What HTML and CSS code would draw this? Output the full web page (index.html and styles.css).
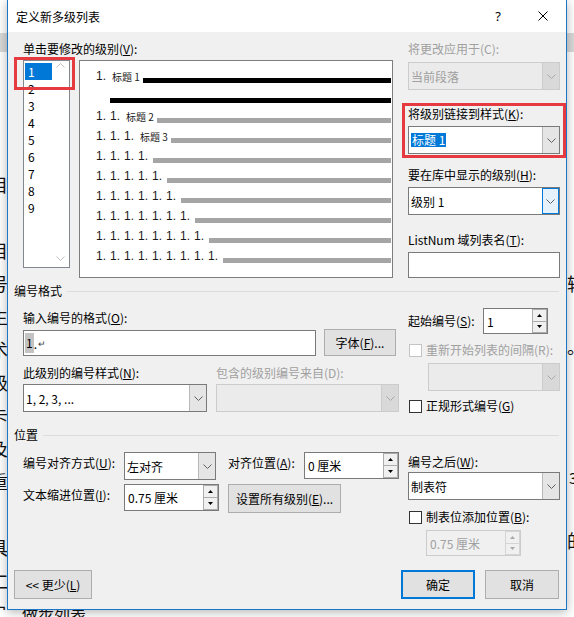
FILE: index.html
```html
<!DOCTYPE html>
<html lang="zh-CN">
<head>
<meta charset="utf-8">
<title>定义新多级列表</title>
<link rel="stylesheet" href="styles.css">
</head>
<body>
<div class="page">
  <div class="doc-left">
    <div class="ruler"></div>
    <span class="dl dl-first">”</span>
    <span class="dl">目</span>
    <span class="dl">。</span>
    <span class="dl">目</span>
    <span class="dl">号</span>
    <span class="dl">生</span>
    <span class="dl">术</span>
    <span class="dl">级</span>
    <span class="dl">卡</span>
    <span class="dl">及</span>
    <span class="dl">重</span>
    <span class="dl">&nbsp;</span>
    <span class="dl">具</span>
    <span class="dl">仁</span>
    <span class="dl">已</span>
  </div>

  <div class="dialog">
    <div class="titlebar">
      <div class="title">定义新多级列表</div>
      <div class="tb-btn tb-help">?</div>
      <div class="tb-btn tb-close"><svg width="10" height="10" viewBox="0 0 10 10"><path d="M0.5 0.5L9.5 9.5M9.5 0.5L0.5 9.5"/></svg></div>
    </div>

    <div class="body">
      <div class="top">
        <div class="top-left">
          <div class="label lbl-levels">单击要修改的级别(<u>V</u>):</div>
          <div class="top-row">
            <div class="levels">
              <div class="level-items">
                <div class="lv lv-sel">1</div>
                <div class="lv">2</div>
                <div class="lv">3</div>
                <div class="lv">4</div>
                <div class="lv">5</div>
                <div class="lv">6</div>
                <div class="lv">7</div>
                <div class="lv">8</div>
                <div class="lv">9</div>
              </div>
              <div class="vscroll">
                <svg class="chev" width="9" height="5" viewBox="0 0 9 5"><polyline points="0.5,4.5 4.5,0.5 8.5,4.5"/></svg>
                <svg class="chev" width="9" height="5" viewBox="0 0 9 5"><polyline points="0.5,0.5 4.5,4.5 8.5,0.5"/></svg>
              </div>
            </div>
            <div class="preview">
              <div class="pv-row"><span class="pv-num">1.</span><span class="pv-ttl">标题 1</span><span class="bar bar-dark"></span></div>
              <div class="pv-row"><span class="bar bar-dark bar-cont"></span></div>
              <div class="pv-row"><span class="pv-num">1. 1.</span><span class="pv-ttl">标题 2</span><span class="bar"></span></div>
              <div class="pv-row"><span class="pv-num">1. 1. 1.</span><span class="pv-ttl">标题 3</span><span class="bar"></span></div>
              <div class="pv-row"><span class="pv-num">1. 1. 1. 1.</span><span class="bar"></span></div>
              <div class="pv-row"><span class="pv-num">1. 1. 1. 1. 1.</span><span class="bar"></span></div>
              <div class="pv-row"><span class="pv-num">1. 1. 1. 1. 1. 1.</span><span class="bar"></span></div>
              <div class="pv-row"><span class="pv-num">1. 1. 1. 1. 1. 1. 1.</span><span class="bar"></span></div>
              <div class="pv-row"><span class="pv-num">1. 1. 1. 1. 1. 1. 1. 1.</span><span class="bar"></span></div>
              <div class="pv-row"><span class="pv-num">1. 1. 1. 1. 1. 1. 1. 1. 1.</span><span class="bar"></span></div>
            </div>
          </div>
        </div>

        <div class="top-right">
          <div class="label dis">将更改应用于(C):</div>
          <div class="combo combo-dis mt-5"><span class="combo-val">当前段落</span><span class="combo-btn"><svg class="chev" width="9" height="5" viewBox="0 0 9 5"><polyline points="0.5,0.5 4.5,4.5 8.5,0.5"/></svg></span></div>
          <div class="label mt-16">将级别链接到样式(<u>K</u>):</div>
          <div class="combo mt-4"><span class="combo-val"><span class="hl">标题 1</span></span><span class="combo-btn"><svg class="chev" width="9" height="5" viewBox="0 0 9 5"><polyline points="0.5,0.5 4.5,4.5 8.5,0.5"/></svg></span></div>
          <div class="label mt-13">要在库中显示的级别(<u>H</u>):</div>
          <div class="combo mt-4"><span class="combo-val">级别 1</span><span class="combo-btn combo-btn-focus"><svg class="chev" width="9" height="5" viewBox="0 0 9 5"><polyline points="0.5,0.5 4.5,4.5 8.5,0.5"/></svg></span></div>
          <div class="label mt-17">ListNum 域列表名(<u>T</u>):</div>
          <div class="textbox mt-4"></div>
        </div>
      </div>

      <div class="sec-head mt-5">编号格式</div>
      <div class="sec">
        <div class="sec-left">
          <div class="label mt-11">输入编号的格式(<u>O</u>):</div>
          <div class="fmt-row mt-3">
            <div class="textbox fmt-input"><span class="sel-grey">1</span>.<span class="pilcrow">↵</span></div>
            <div class="btn btn-font">字体(<u>F</u>)...</div>
          </div>
          <div class="two-col mt-9">
            <div class="label">此级别的编号样式(<u>N</u>):</div>
            <div class="label dis">包含的级别编号来自(D):</div>
          </div>
          <div class="two-col mt-3">
            <div class="combo"><span class="combo-val">1, 2, 3, ...</span><span class="combo-btn"><svg class="chev" width="9" height="5" viewBox="0 0 9 5"><polyline points="0.5,0.5 4.5,4.5 8.5,0.5"/></svg></span></div>
            <div class="combo combo-dis"><span class="combo-val"></span><span class="combo-btn"><svg class="chev" width="9" height="5" viewBox="0 0 9 5"><polyline points="0.5,0.5 4.5,4.5 8.5,0.5"/></svg></span></div>
          </div>
        </div>
        <div class="sec-right">
          <div class="start-row mt-9">
            <div class="label start-label">起始编号(<u>S</u>):</div>
            <div class="spin start-spin"><span class="spin-val">1</span><span class="spin-arrows"><span class="spin-btn"><svg class="tri" width="5" height="3" viewBox="0 0 5 3"><path d="M0 3L2.5 0L5 3Z"/></svg></span><span class="spin-btn"><svg class="tri" width="5" height="3" viewBox="0 0 5 3"><path d="M0 0L2.5 3L5 0Z"/></svg></span></span></div>
          </div>
          <div class="check-row dis mt-8"><span class="checkbox"></span>重新开始列表的间隔(R):</div>
          <div class="combo combo-dis restart-combo mt-5"><span class="combo-val"></span><span class="combo-btn"><svg class="chev" width="9" height="5" viewBox="0 0 9 5"><polyline points="0.5,0.5 4.5,4.5 8.5,0.5"/></svg></span></div>
          <div class="check-row mt-7"><span class="checkbox"></span>正规形式编号(<u>G</u>)</div>
        </div>
      </div>

      <div class="sec-head mt-13">位置</div>
      <div class="sec">
        <div class="sec-left">
          <div class="pos-row mt-9">
            <div class="label pos-label">编号对齐方式(<u>U</u>):</div>
            <div class="combo align-combo"><span class="combo-val">左对齐</span><span class="combo-btn"><svg class="chev" width="9" height="5" viewBox="0 0 9 5"><polyline points="0.5,0.5 4.5,4.5 8.5,0.5"/></svg></span></div>
            <div class="label pos-label2">对齐位置(<u>A</u>):</div>
            <div class="spin pos-spin"><span class="spin-val">0 厘米</span><span class="spin-arrows"><span class="spin-btn"><svg class="tri" width="5" height="3" viewBox="0 0 5 3"><path d="M0 3L2.5 0L5 3Z"/></svg></span><span class="spin-btn"><svg class="tri" width="5" height="3" viewBox="0 0 5 3"><path d="M0 0L2.5 3L5 0Z"/></svg></span></span></div>
          </div>
          <div class="pos-row mt-4">
            <div class="label pos-label">文本缩进位置(<u>I</u>):</div>
            <div class="spin pos-spin"><span class="spin-val">0.75 厘米</span><span class="spin-arrows"><span class="spin-btn"><svg class="tri" width="5" height="3" viewBox="0 0 5 3"><path d="M0 3L2.5 0L5 3Z"/></svg></span><span class="spin-btn"><svg class="tri" width="5" height="3" viewBox="0 0 5 3"><path d="M0 0L2.5 3L5 0Z"/></svg></span></span></div>
            <div class="btn btn-all">设置所有级别(<u>E</u>)...</div>
          </div>
        </div>
        <div class="sec-right">
          <div class="label mt-11">编号之后(<u>W</u>):</div>
          <div class="combo mt-2"><span class="combo-val">制表符</span><span class="combo-btn"><svg class="chev" width="9" height="5" viewBox="0 0 9 5"><polyline points="0.5,0.5 4.5,4.5 8.5,0.5"/></svg></span></div>
          <div class="check-row mt-9"><span class="checkbox"></span>制表位添加位置(<u>B</u>):</div>
          <div class="spin spin-dis tabpos-spin mt-5"><span class="spin-val">0.75 厘米</span><span class="spin-arrows"><span class="spin-btn"><svg class="tri" width="5" height="3" viewBox="0 0 5 3"><path d="M0 3L2.5 0L5 3Z"/></svg></span><span class="spin-btn"><svg class="tri" width="5" height="3" viewBox="0 0 5 3"><path d="M0 0L2.5 3L5 0Z"/></svg></span></span></div>
        </div>
      </div>

      <div class="footer">
        <div class="btn btn-less">&lt;&lt; 更少(<u>L</u>)</div>
        <div class="btn btn-ok">确定</div>
        <div class="btn btn-cancel">取消</div>
      </div>

      <div class="mark mark-level"></div>
      <div class="mark mark-link"></div>
    </div>
  </div>

  <div class="doc-right">
    <div class="ruler"></div>
    <span class="dr dr-1">辑</span>
    <span class="dr dr-2">。</span>
    <span class="dr dr-3">3</span>
    <span class="dr dr-4">的</span>
  </div>
  <div class="doc-bottom">做步列表</div>
</div>
</body>
</html>
```

FILE: styles.css
```css
* { box-sizing: border-box; }
html, body { margin: 0; padding: 0; }
body {
  width: 574px;
  height: 617px;
  overflow: hidden;
  background: #fff;
  font-family: "Noto Sans CJK SC", "Noto Sans", sans-serif;
  font-size: 12px;
  color: #000;
}
u { text-decoration: underline; text-underline-offset: 1px; }

.page {
  display: grid;
  grid-template-columns: 7px 560px 7px;
  grid-template-rows: 610px 7px;
  width: 574px;
  height: 617px;
}

/* document behind the dialog */
.doc-left {
  grid-column: 1;
  grid-row: 1;
  overflow: hidden;
  display: flex;
  flex-direction: column;
  align-items: flex-end;
  font-size: 18px;
  color: #111;
}
.ruler {
  flex: none;
  width: 7px;
  height: 19px;
  margin-top: 33px;
  background: #d9d9d9;
}
.dl {
  flex: none;
  height: 33px;
  line-height: 33px;
  white-space: nowrap;
  margin-right: -1px;
}
.dl-first { margin-top: 83px; }
.doc-right {
  grid-column: 3;
  grid-row: 1;
  overflow: hidden;
  display: flex;
  flex-direction: column;
  align-items: flex-start;
  font-size: 18px;
  color: #111;
}
.dr { flex: none; height: 20px; line-height: 20px; white-space: nowrap; }
.dr-1 { margin-top: 221px; }
.dr-2 { margin-top: 43px; }
.dr-3 { margin-top: 112px; padding-left: 2px; font-size: 15px; }
.dr-4 { margin-top: 42px; }
.doc-bottom {
  grid-column: 1 / -1;
  grid-row: 2;
  position: relative;
  z-index: 1;
  margin-top: -7px;
  height: 20px;
  padding-left: 22px;
  font-size: 16px;
  line-height: 20px;
  color: #111;
  white-space: nowrap;
}

/* dialog */
.dialog {
  grid-column: 2;
  grid-row: 1;
  position: relative;
  z-index: 2;
  display: flex;
  flex-direction: column;
  background: #f0f0f0;
  border: 1px solid #1a76c9;
  border-top: 0;
  box-shadow: 0 2px 10px rgba(0, 0, 0, 0.3);
}
.titlebar {
  flex: none;
  height: 32px;
  background: #fff;
  display: flex;
  align-items: center;
}
.title { flex: 1; padding-left: 8px; }
.tb-btn {
  width: 44px;
  height: 32px;
  display: flex;
  align-items: center;
  justify-content: center;
}
.tb-help { font-family: "Noto Sans", sans-serif; font-size: 13px; }
.tb-close { width: 46px; }
.tb-close svg { display: block; }
.tb-close path { stroke: #000; stroke-width: 1; fill: none; }

.body {
  flex: 1;
  position: relative;
  display: flex;
  flex-direction: column;
  padding: 9px 6px 10px;
}

.mt-2 { margin-top: 2px; }
.mt-3 { margin-top: 3px; }
.mt-4 { margin-top: 4px; }
.mt-5 { margin-top: 5px; }
.mt-7 { margin-top: 7px; }
.mt-8 { margin-top: 8px; }
.mt-9 { margin-top: 9px; }
.mt-11 { margin-top: 11px; }
.mt-13 { margin-top: 13px; }
.mt-16 { margin-top: 16px; }
.mt-17 { margin-top: 17px; }

.label { height: 16px; line-height: 16px; white-space: nowrap; }
.dis { color: #a0a0a0; }

/* top area */
.top { display: flex; gap: 15px; margin-left: 9px; }
.top-left { width: 370px; flex: none; }
.top-right { width: 152px; flex: none; }
.lbl-levels { margin-bottom: 3px; }
.top-row { display: flex; gap: 9px; align-items: flex-start; }

.levels {
  flex: none;
  width: 47px;
  height: 208px;
  border: 1px solid #828790;
  background: #fff;
  display: flex;
}
.level-items { width: 28px; padding: 2px 0 0 1px; }
.lv { height: 17px; line-height: 17px; padding-left: 3px; }
.lv-sel { background: #0078d7; color: #fff; }
.vscroll {
  flex: 1;
  display: flex;
  flex-direction: column;
  justify-content: space-between;
  align-items: center;
  padding: 2px 0 6px;
}
.chev { display: block; }
.chev polyline { fill: none; stroke: #606060; stroke-width: 1; }
.vscroll .chev polyline { stroke: #c0c0c0; }

.preview {
  flex: none;
  width: 314px;
  height: 218px;
  border: 1px solid #7e7e7e;
  background: #fff;
  padding: 4px 1px 0 16px;
}
.pv-row { display: flex; align-items: flex-end; height: 20px; }
.pv-num {
  font-family: "Liberation Sans", Arial, sans-serif;
  font-size: 12px;
  line-height: 14px;
  word-spacing: 0.67px;
  white-space: pre;
  margin-bottom: 2px;
  color: #1a1a1a;
}
.pv-ttl {
  flex: none;
  width: 36px;
  margin-left: 1px;
  padding-left: 5px;
  font-size: 10px;
  line-height: 12px;
  margin-bottom: 2px;
  white-space: nowrap;
  color: #1a1a1a;
}
.bar { flex: 1; height: 5px; margin: 0 0 2px 5px; background: #a5a5a5; }
.pv-ttl + .bar { margin-left: 0; }
.bar-dark { background: #000; }
.bar-cont { margin-left: 14px; }

/* controls */
.combo {
  display: flex;
  height: 28px;
  background: #fff;
  border: 1px solid #7a7a7a;
}
.combo-val {
  flex: 1;
  display: flex;
  align-items: center;
  padding-left: 2px;
  white-space: nowrap;
  overflow: hidden;
}
.combo-btn {
  flex: none;
  width: 17px;
  display: flex;
  align-items: center;
  justify-content: center;
  background: #e5e5e5;
  border-left: 1px solid #b9b9b9;
}
.combo-btn-focus { background: #e5f1fb; border: 1px solid #0078d7; }
.combo-dis { background: #ebebeb; border-color: #cccccc; color: #a0a0a0; }
.combo-dis .combo-btn { background: #d9d9d9; border-left-color: #cccccc; }
.combo-dis .chev polyline { stroke: #a8a8a8; }
.hl { background: #0078d7; color: #fff; line-height: 14px; padding: 0 1px; }
.textbox { height: 26px; background: #fff; border: 1px solid #7a7a7a; }

.btn {
  display: flex;
  align-items: center;
  justify-content: center;
  height: 29px;
  background: #e1e1e1;
  border: 1px solid #adadad;
  white-space: nowrap;
}

.spin {
  display: flex;
  height: 26px;
  background: #fff;
  border: 1px solid #7a7a7a;
}
.spin-val { flex: 1; display: flex; align-items: center; padding-left: 3px; white-space: nowrap; }
.spin-arrows { flex: none; width: 15px; display: flex; flex-direction: column; }
.spin-btn {
  flex: 1;
  display: flex;
  align-items: center;
  justify-content: center;
  background: #f0f0f0;
  border: 1px solid #acacac;
}
.spin-btn + .spin-btn { border-top: 0; }
.tri { display: block; }
.tri path { fill: #000; }
.spin-dis { background: #f0f0f0; border-color: #cccccc; color: #a0a0a0; }
.spin-dis .spin-btn { border-color: #d5d5d5; }
.spin-dis .tri path { fill: #a8a8a8; }

.check-row {
  display: flex;
  align-items: center;
  height: 16px;
  line-height: 16px;
  white-space: nowrap;
  padding-left: 1px;
}
.checkbox {
  flex: none;
  width: 13px;
  height: 13px;
  border: 1px solid #333;
  background: #fff;
  margin-right: 4px;
}
.check-row.dis .checkbox { border-color: #c4c4c4; }

/* sections */
.sec-head {
  display: flex;
  align-items: center;
  height: 16px;
  line-height: 16px;
  white-space: nowrap;
}
.sec-head::after {
  content: "";
  flex: 1;
  height: 1px;
  background: #dcdcdc;
  margin: 0 1px 0 5px;
}
.sec { display: flex; gap: 9px; margin-left: 9px; align-items: flex-start; }
.sec-left { width: 376px; flex: none; }
.sec-right { width: 152px; flex: none; }

.fmt-row { display: flex; gap: 8px; align-items: flex-start; }
.fmt-input { width: 293px; margin-top: 1px; display: flex; align-items: center; padding-left: 1px; }
.sel-grey { display: inline-block; background: #c3c3c3; line-height: 20px; padding: 0 1px; }
.pilcrow { font-size: 9px; color: #444; margin-left: 1px; }
.btn-font { width: 72px; height: 27px; }
.two-col { display: grid; grid-template-columns: 184px 183px; column-gap: 9px; }

.start-row { display: flex; align-items: center; }
.start-label { width: 75px; flex: none; }
.start-spin { width: 65px; }
.restart-combo { margin-left: 20px; width: 132px; }

.pos-row { display: flex; align-items: flex-start; }
.pos-label { width: 101px; flex: none; margin-top: 3px; }
.pos-label2 { width: 76px; flex: none; margin-left: 12px; margin-top: 3px; }
.align-combo { width: 92px; flex: none; }
.pos-spin { width: 95px; height: 27px; flex: none; }
.btn-all { width: 113px; margin-left: 9px; }
.tabpos-spin { width: 95px; margin-left: 18px; }

.footer { margin-top: auto; display: flex; gap: 10px; margin-right: 1px; }
.btn-less { width: 78px; margin-right: auto; }
.btn-ok { width: 74px; border: 2px solid #0078d7; }
.btn-cancel { width: 74px; }

/* red annotation frames */
.mark { position: absolute; border: 3px solid #e53a40; pointer-events: none; }
.mark-level { left: 6px; top: 25px; width: 61px; height: 33px; }
.mark-link { left: 394px; top: 71px; width: 164px; height: 55px; }
```
